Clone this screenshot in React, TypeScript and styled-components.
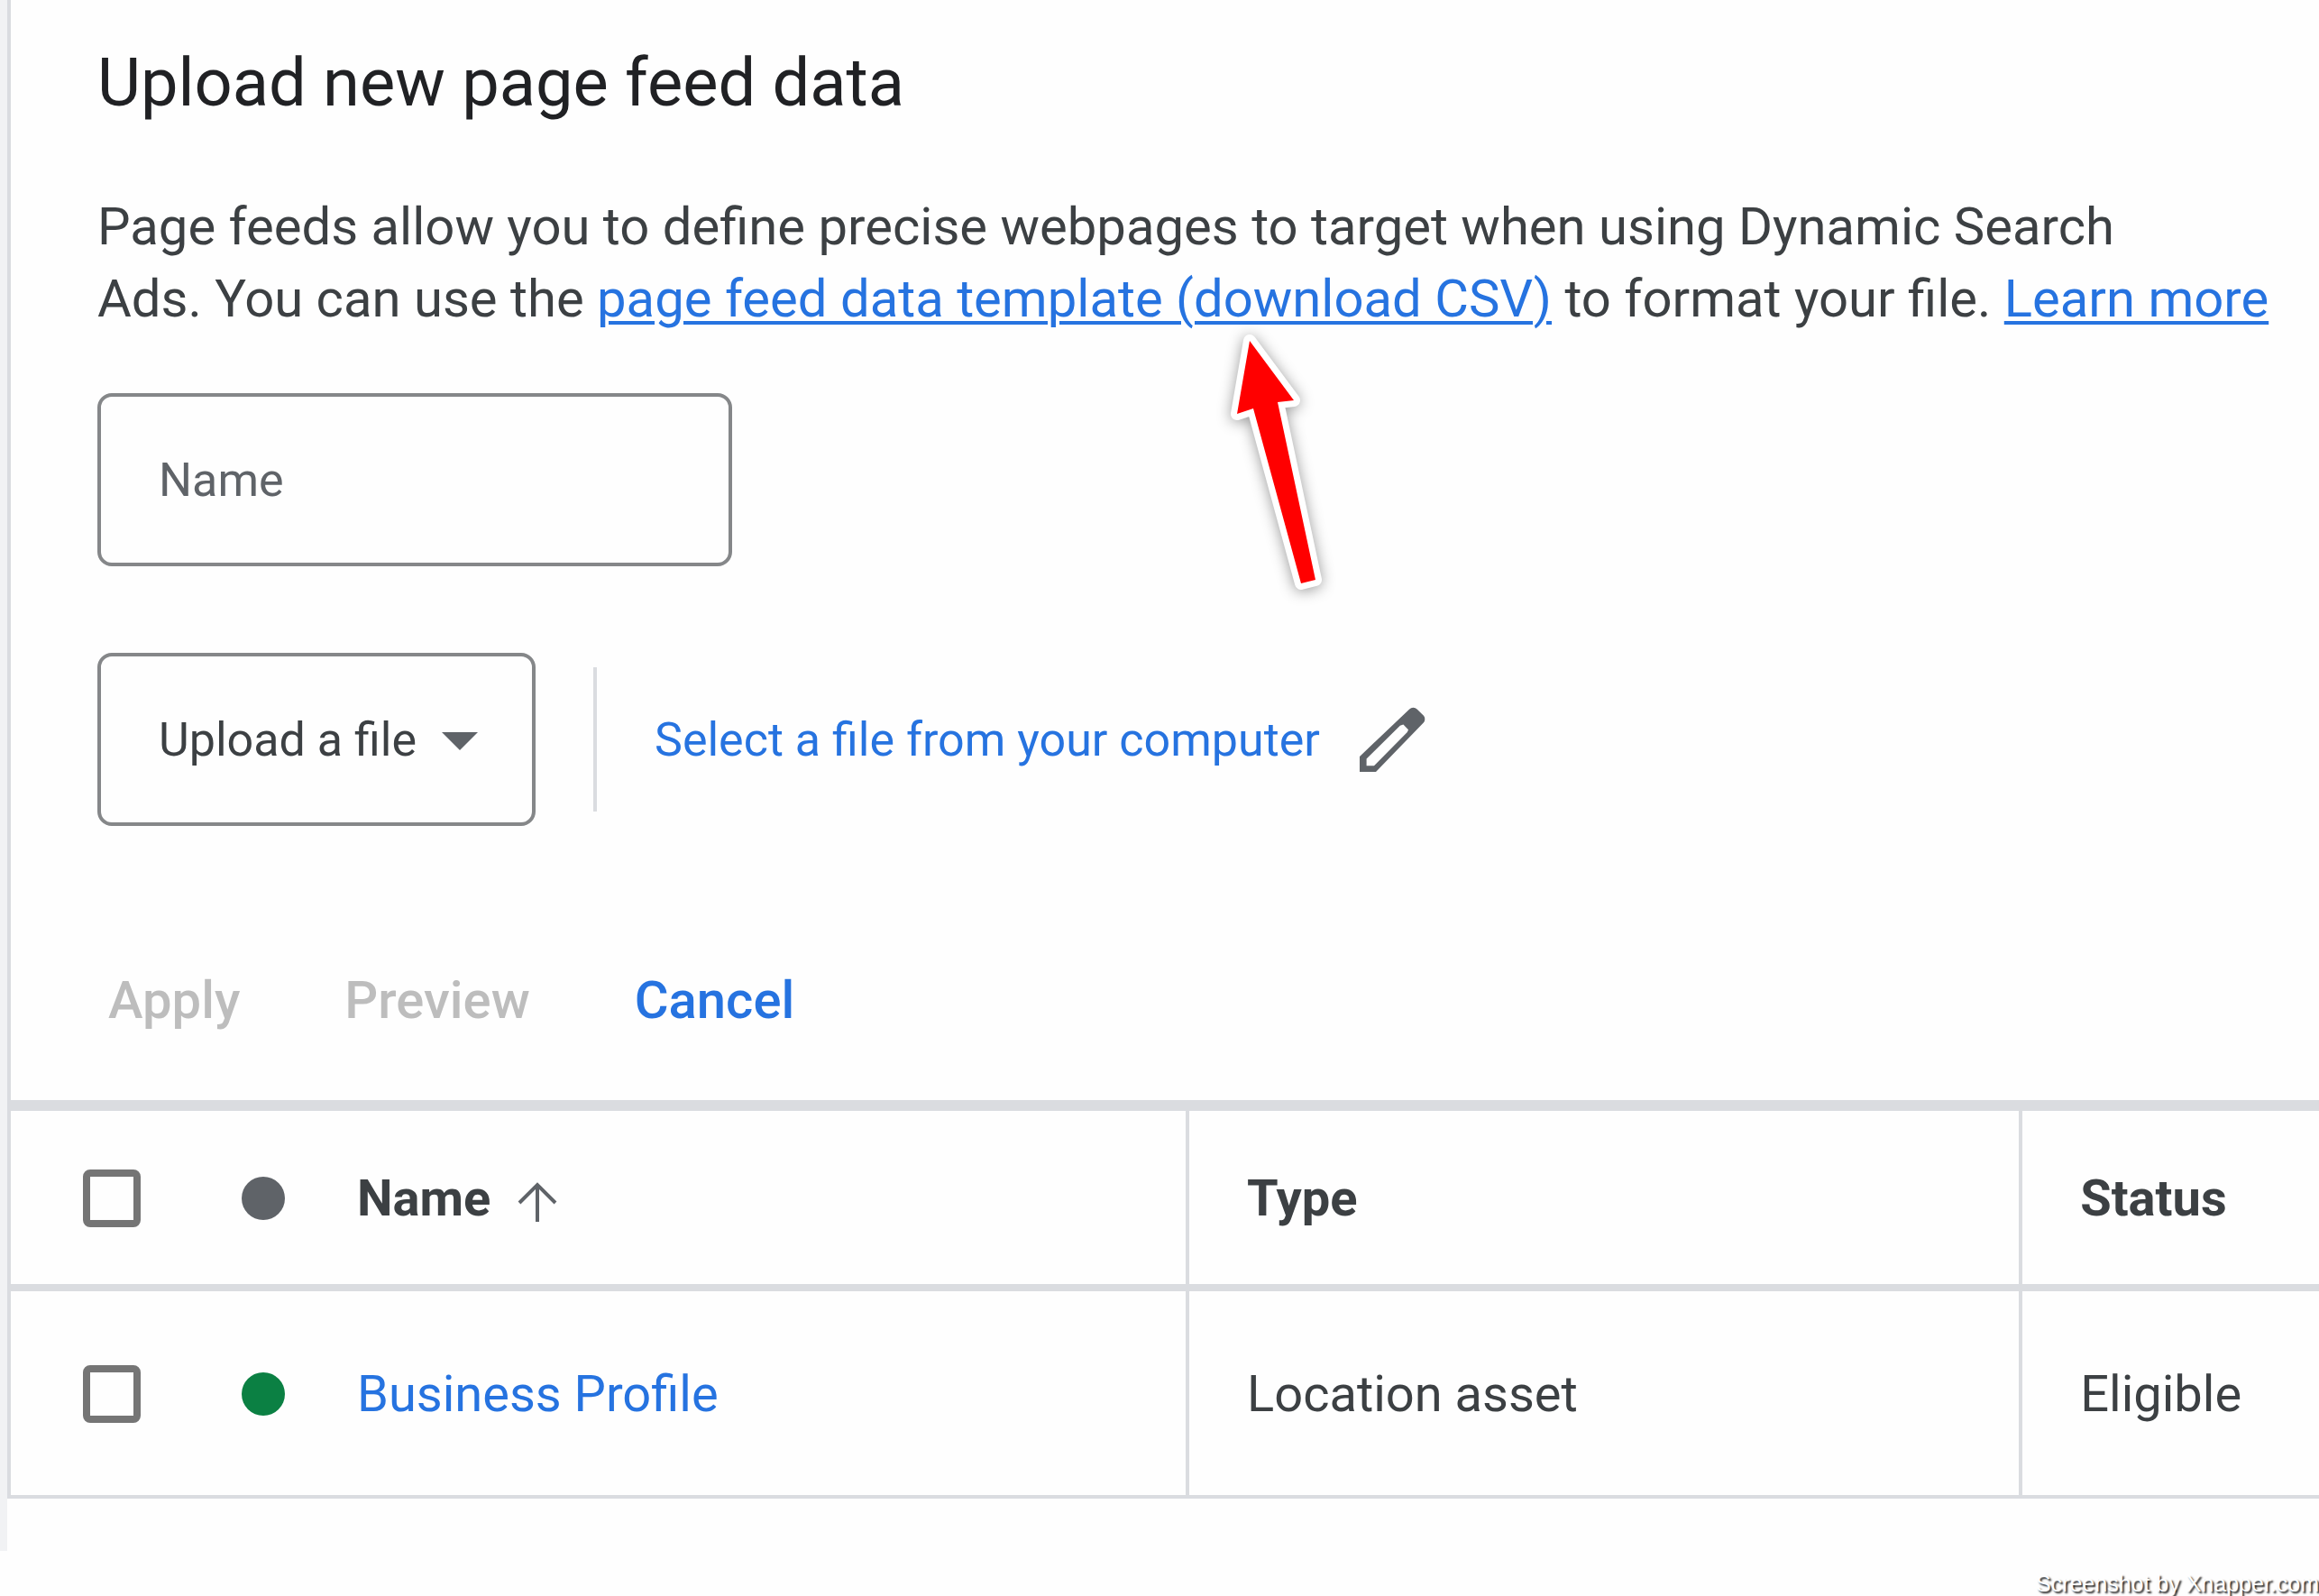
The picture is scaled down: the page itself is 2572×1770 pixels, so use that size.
import React from 'react';
import styled, { createGlobalStyle, css } from 'styled-components';

const color = {
  ink: '#202124',
  text: '#3c4043',
  muted: '#5f6368',
  outline: '#858789',
  line: '#dadce0',
  link: '#2673e0',
  disabled: '#bdbdbd',
  green: '#0b8043',
};

const GlobalStyle = createGlobalStyle`
  *, *::before, *::after { box-sizing: border-box; }
  body {
    margin: 0;
    background: #fefefe;
    color: ${color.text};
    font-family: Roboto, "Liberation Sans", Arial, sans-serif;
    font-size: 56px;
    line-height: 80px;
  }
  button, input, select { font: inherit; color: inherit; }
`;

const Page = styled.div`
  display: flex;
  flex-direction: column;
  overflow-x: hidden;
`;

const Shell = styled.div`
  display: flex;
  align-items: stretch;
`;

const Rail = styled.div`
  flex: 0 0 8px;
  background: #f1f2f4;
`;

const Content = styled.main`
  flex: 1;
  min-width: 0;
  padding-bottom: 58px;
`;

const Panel = styled.div`
  position: relative;
  border-left: 4px solid ${color.line};
`;

const UploadForm = styled.form`
  padding: 44px 0 71px 96px;
`;

const Title = styled.h1`
  margin: 0 0 71px;
  color: ${color.ink};
  font-size: 74px;
  font-weight: 400;
  line-height: 96px;
`;

const Intro = styled.p`
  margin: 0 0 65px;
  font-size: 58px;
`;

const Link = styled.a<{ $underlined?: boolean }>`
  color: ${color.link};
  text-decoration: ${(p) => (p.$underlined ? 'underline' : 'none')};
  text-decoration-thickness: 4px;
  text-underline-offset: 5px;
`;

const fieldBox = css`
  height: 192px;
  border: 4px solid ${color.outline};
  border-radius: 16px;
  background: transparent;
  font-size: 52px;
  outline: none;
`;

const NameInput = styled.input`
  ${fieldBox}
  display: block;
  width: 704px;
  max-width: 100%;
  padding: 0 64px;
  &::placeholder { color: ${color.muted}; opacity: 1; }
`;

const SourceRow = styled.div`
  display: flex;
  align-items: center;
  margin-top: 96px;
`;

const SelectWrap = styled.div`
  position: relative;
`;

const SourceSelect = styled.select`
  ${fieldBox}
  appearance: none;
  width: 486px;
  padding: 2px 120px 0 64px;
`;

const Caret = styled.svg`
  position: absolute;
  top: 88px;
  right: 64px;
  width: 40px;
  height: 20px;
  pointer-events: none;
`;

const Divider = styled.span`
  width: 4px;
  height: 160px;
  margin: 0 64px;
  background: ${color.line};
`;

const PlainButton = styled.button`
  padding: 0;
  border: 0;
  background: none;
  cursor: pointer;
`;

const FileButton = styled(PlainButton)`
  padding-top: 2px;
  color: ${color.link};
  font-size: 52px;
`;

const EditButton = styled(PlainButton)`
  display: flex;
  margin-left: 32px;
`;

const Actions = styled.div`
  display: flex;
  gap: 116px;
  margin-top: 153px;
  padding-left: 12px;
`;

const ActionButton = styled(PlainButton)`
  color: ${color.link};
  font-size: 58px;
  font-weight: 500;
  &:disabled { color: ${color.disabled}; cursor: default; }
`;

const Table = styled.table`
  width: 100%;
  border-collapse: separate;
  border-spacing: 0;
  table-layout: fixed;
  border-top: 12px solid ${color.line};
`;

const cell = css<{ $divided?: boolean }>`
  padding: 2px 64px 0;
  border-left: ${(p) => (p.$divided ? `4px solid ${color.line}` : '0')};
  text-align: left;
  vertical-align: middle;
`;

const HeadCell = styled.th<{ $divided?: boolean }>`
  ${cell}
  height: 200px;
  border-bottom: 8px solid ${color.line};
  font-weight: 700;
`;

const Cell = styled.td<{ $divided?: boolean }>`
  ${cell}
  height: 230px;
  border-bottom: 4px solid ${color.line};
`;

const Lead = styled.div`
  display: flex;
  align-items: center;
  margin-left: 16px;
`;

const Check = styled.input`
  appearance: none;
  flex: none;
  width: 64px;
  height: 64px;
  margin: 0;
  border: 8px solid #757575;
  border-radius: 8px;
`;

const Dot = styled.span<{ $color: string }>`
  flex: none;
  width: 48px;
  height: 48px;
  margin: 0 80px 0 112px;
  border-radius: 50%;
  background: ${(p) => p.$color};
`;

const SortIcon = styled.svg`
  width: 44px;
  height: 44px;
  margin: 8px 0 0 30px;
`;

const Pointer = styled.svg`
  position: absolute;
  top: 340px;
  left: 1308px;
  width: 200px;
  height: 340px;
  overflow: visible;
  pointer-events: none;
  filter: drop-shadow(0 2px 8px rgba(0, 0, 0, 0.4));
`;

const Credit = styled.footer`
  height: 50px;
  padding-top: 20px;
  color: #fff;
  font-family: "Liberation Sans", Arial, sans-serif;
  font-size: 25px;
  line-height: 32px;
  text-align: right;
  text-shadow: 2px 2px 2px #1c1c1c;
`;

type Row = { id: string; name: string; type: string; status: string };

const rows: Row[] = [
  { id: 'business-profile', name: 'Business Profile', type: 'Location asset', status: 'Eligible' },
];

export default function App() {
  return (
    <Page>
      <GlobalStyle />
      <Shell>
        <Rail />
        <Content>
          <Panel>
            <UploadForm onSubmit={(e) => e.preventDefault()}>
              <Title>Upload new page feed data</Title>
              <Intro>
                Page feeds allow you to define precise webpages to target when using Dynamic Search
                <br />
                Ads. You can use the{' '}
                <Link $underlined href="#template">page feed data template (download CSV)</Link>{' '}
                to format your file. <Link $underlined href="#learn-more">Learn more</Link>
              </Intro>
              <NameInput type="text" placeholder="Name" aria-label="Name" />
              <SourceRow>
                <SelectWrap>
                  <SourceSelect aria-label="Source" defaultValue="file">
                    <option value="file">Upload a file</option>
                  </SourceSelect>
                  <Caret viewBox="0 0 40 20" aria-hidden="true">
                    <path d="M0 0h40L20 20z" fill={color.muted} />
                  </Caret>
                </SelectWrap>
                <Divider />
                <FileButton type="button">Select a file from your computer</FileButton>
                <EditButton type="button" aria-label="Edit">
                  <svg width="96" height="96" viewBox="0 0 24 24" aria-hidden="true">
                    <path
                      fill={color.muted}
                      fillRule="evenodd"
                      d="M3 16.75V21h4.5L20.7 7.4a1.5 1.5 0 0 0 0-2l-1.8-1.8a1.5 1.5 0 0 0-2.1 0zM4.9 19.3v-1.9L14.2 8.2l.9-.3 1.4 1.4-.3.7L7 19.3z"
                    />
                  </svg>
                </EditButton>
              </SourceRow>
              <Actions>
                <ActionButton type="submit" disabled>Apply</ActionButton>
                <ActionButton type="button" disabled>Preview</ActionButton>
                <ActionButton type="button">Cancel</ActionButton>
              </Actions>
            </UploadForm>
            <Table>
              <colgroup>
                <col style={{ width: '50.9%' }} />
                <col style={{ width: '36.1%' }} />
                <col />
              </colgroup>
              <thead>
                <tr>
                  <HeadCell scope="col">
                    <Lead>
                      <Check type="checkbox" aria-label="Select all" />
                      <Dot $color={color.muted} />
                      Name
                      <SortIcon viewBox="0 0 44 44" aria-hidden="true">
                        <path d="M22 44V3M2 23 22 3l20 20" fill="none" stroke={color.muted} strokeWidth="4" />
                      </SortIcon>
                    </Lead>
                  </HeadCell>
                  <HeadCell scope="col" $divided>Type</HeadCell>
                  <HeadCell scope="col" $divided>Status</HeadCell>
                </tr>
              </thead>
              <tbody>
                {rows.map((row) => (
                  <tr key={row.id}>
                    <Cell>
                      <Lead>
                        <Check type="checkbox" aria-label={`Select ${row.name}`} />
                        <Dot $color={color.green} />
                        <Link href={`#${row.id}`}>{row.name}</Link>
                      </Lead>
                    </Cell>
                    <Cell $divided>{row.type}</Cell>
                    <Cell $divided>{row.status}</Cell>
                  </tr>
                ))}
              </tbody>
            </Table>
            <Pointer viewBox="0 0 200 340" aria-hidden="true">
              <path
                d="M66 38 115 104 97 106 139 303 123 307 70 113 52 119z"
                fill="#f00"
                stroke="#fff"
                strokeWidth="14"
                strokeLinejoin="round"
                paintOrder="stroke"
              />
            </Pointer>
          </Panel>
        </Content>
      </Shell>
      <Credit>Screenshot by Xnapper.com</Credit>
    </Page>
  );
}
